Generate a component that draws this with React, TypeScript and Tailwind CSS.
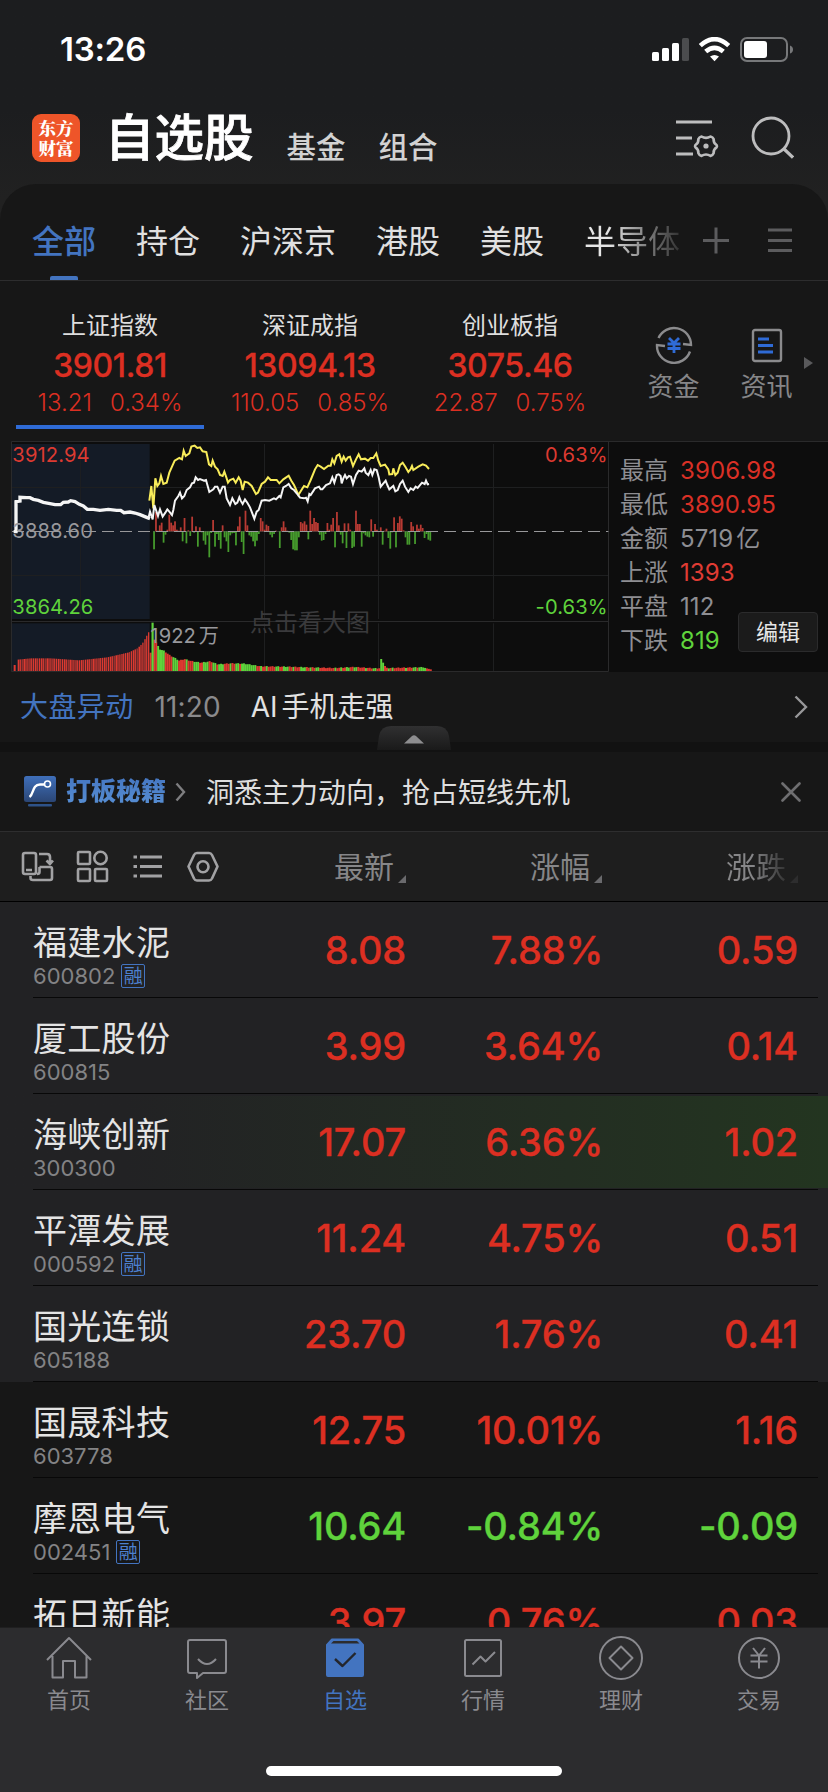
import type { ReactNode } from 'react';

const tabs = ['持仓', '沪深京', '港股', '美股'];

const indices = [
  { name: '上证指数', value: '3901.81', change: '13.21', pct: '0.34%', active: true },
  { name: '深证成指', value: '13094.13', change: '110.05', pct: '0.85%', active: false },
  { name: '创业板指', value: '3075.46', change: '22.87', pct: '0.75%', active: false },
];

const stats = [
  { label: '最高', value: '3906.98', color: 'text-[#d93026]' },
  { label: '最低', value: '3890.95', color: 'text-[#d93026]' },
  { label: '金额', value: '5719', unit: '亿', color: 'text-[#8e8e93]' },
  { label: '上涨', value: '1393', color: 'text-[#e03c34]' },
  { label: '平盘', value: '112', color: 'text-[#8e8e93]' },
  { label: '下跌', value: '819', color: 'text-[#5fd33c]' },
];

type Stock = { name: string; code: string; margin?: boolean; price: string; pct: string; diff: string; down?: boolean; pinned?: boolean; flash?: boolean };

const stocks: Stock[] = [
  { name: '福建水泥', code: '600802', margin: true, price: '8.08', pct: '7.88%', diff: '0.59', pinned: true },
  { name: '厦工股份', code: '600815', price: '3.99', pct: '3.64%', diff: '0.14', pinned: true },
  { name: '海峡创新', code: '300300', price: '17.07', pct: '6.36%', diff: '1.02', pinned: true, flash: true },
  { name: '平潭发展', code: '000592', margin: true, price: '11.24', pct: '4.75%', diff: '0.51', pinned: true },
  { name: '国光连锁', code: '605188', price: '23.70', pct: '1.76%', diff: '0.41', pinned: true },
  { name: '国晟科技', code: '603778', price: '12.75', pct: '10.01%', diff: '1.16' },
  { name: '摩恩电气', code: '002451', margin: true, price: '10.64', pct: '-0.84%', diff: '-0.09', down: true },
  { name: '拓日新能', code: '', price: '3.97', pct: '0.76%', diff: '0.03' },
];

const preLine =
  '41,305 48,305 48,215 60,213 60,202 80,203 90,203 100,208 115,211 130,217 150,221 165,224 182,224 190,217 205,216 212,212 225,215 238,223 250,228 262,238 280,238 300,241 325,238 350,241 362,241 372,248 390,246 405,249 420,254 440,262 450,266';
const whiteLine =
  '446,262 450,245 458,268 463,225 468,240 474,258 480,238 488,260 496,248 502,238 508,245 516,255 520,240 525,212 535,198 540,188 546,205 553,198 560,180 570,172 576,160 582,158 587,142 594,150 600,147 612,152 618,150 628,186 640,178 645,170 652,170 660,188 668,170 674,170 680,205 690,225 697,205 706,222 712,218 718,202 722,212 728,222 735,208 742,218 750,232 763,266 770,245 776,240 785,212 795,210 808,212 822,205 828,208 838,198 842,202 850,172 858,168 866,162 874,175 882,180 892,192 900,203 912,205 918,203 923,214 928,192 932,195 945,175 957,170 962,178 967,178 978,165 990,160 997,142 1003,158 1010,135 1016,133 1022,138 1025,160 1030,145 1035,135 1040,145 1047,138 1053,140 1059,162 1068,135 1076,122 1085,125 1093,115 1097,128 1105,135 1112,120 1117,135 1123,118 1130,120 1136,142 1142,170 1157,152 1162,165 1168,178 1180,168 1186,184 1193,180 1200,162 1208,152 1215,170 1225,186 1232,175 1240,180 1247,170 1253,174 1266,158 1274,162 1278,152 1283,163 1287,162';
const yellowLine =
  '448,212 454,168 460,235 466,145 472,168 478,160 483,138 490,162 500,158 508,128 524,92 538,84 546,88 551,62 557,78 568,70 574,50 584,47 592,54 600,52 608,64 619,66 627,103 634,108 638,92 645,110 653,118 660,135 668,138 673,125 680,145 684,158 690,150 700,146 707,158 716,142 722,152 728,180 734,155 744,158 755,168 768,192 774,188 785,162 795,155 804,142 812,150 830,150 838,160 850,148 866,137 874,152 882,165 888,178 895,195 903,182 912,168 922,172 932,150 945,118 953,105 962,110 972,117 985,107 992,107 997,88 1003,100 1010,78 1018,73 1025,95 1031,80 1037,92 1044,82 1050,80 1059,108 1068,88 1076,73 1083,88 1095,86 1104,92 1112,84 1120,84 1129,70 1135,92 1142,108 1155,104 1165,118 1168,133 1177,132 1180,115 1186,135 1193,128 1200,105 1208,98 1216,110 1225,126 1232,117 1236,108 1240,120 1255,110 1268,103 1278,107 1287,117';

const momentum = [
  -54, 58, 2, 18, 26, -34, -10, 5, 50, 26, 18, 30, 5, 2, 12, -30, 40, -36, 3, -14, 44, -4, 15, -46, 12, -3, -28, -40, -12, -78, -5, 34, -46, -8, -26,
  -52, 18, -18, -30, -62, -12, -6, -5, -42, 15, 44, -32, -68, 62, 18, -12, -16, -30, -45, -28, -8, 40, 30, 5, 20, 16, -10, -18, -8, 2, 0, -50, 12,
  30, 12, 2, -4, -26, -54, -57, -57, -18, 28, 24, 30, 20, -24, 62, 22, 40, 28, 25, -10, -28, -26, -8, 25, 5, 20, 40, -48, 58, 18, -10, -36, 24,
  -50, 24, 5, -50, -46, 62, 22, 22, -46, -6, -12, -16, -18, 36, -16, 22, 5, 0, 12, -40, 2, 8, -20, -52, -3, 42, -48, 25, 45, 38, 3, -18, -40,
  -40, 28, 15, -38, 20, 8, 20, 10, -20, -8, -25, -28,
];

const interpolate = (knots: number[][], x: number) => {
  const i = Math.max(1, knots.findIndex((k) => k[0] >= x));
  const [x0, y0] = knots[i - 1];
  const [x1, y1] = knots[i];
  return y0 + ((y1 - y0) * (x - x0)) / (x1 - x0);
};

const preKnots = [[50, 34], [90, 38], [150, 38], [235, 32], [320, 41], [385, 56], [410, 68], [425, 82], [445, 118], [450, 120]];
const preVolume = Array.from({ length: 69 }, (_, i) => {
  const x = 53 + i * 5.75;
  return { x, h: interpolate(preKnots, x) };
});

const volKnots = [[460, 95], [468, 82], [475, 66], [490, 60], [505, 48], [520, 40], [535, 31], [550, 36], [570, 30], [600, 25], [628, 29], [650, 20], [690, 23], [730, 22], [780, 14], [860, 13], [920, 11], [1000, 9], [1060, 12], [1120, 8], [1300, 12]];
const volColors = 'rrggggrrrrgggrrrrgrrrgggrrgggrrggrgggrrrgrrggrggggggggrrgrrgrrrrggrrgggrrgrrrgggrrgrrggrrrrrrrrgrrgrrggrrggrrrrgrrrggrrggrrgrgrrrrrrgrrrggrggggrrrrggrr';
const volume = Array.from({ length: 146 }, (_, i) => {
  const x = 460 + i * 5.72;
  const base = interpolate(volKnots, x);
  const h = i === 119 ? 36 : i === 120 ? 25 : i === 121 ? 15 : i > 140 ? 12 - (i - 140) * 1.4 : base + ((i * 7) % 3) - 1;
  return { x, h, up: i >= 119 && i <= 120 ? false : volColors[i] === 'r' };
});

function IndexChart() {
  return (
    <svg width="609" height="231" viewBox="0 33 1827 693" className="block shrink-0">
      <rect x="36" y="33" width="1791" height="693" fill="#0d0d0d" />
      <rect x="36" y="42" width="413" height="525" fill="#141b26" />
      <rect x="36" y="580" width="413" height="143" fill="#141b26" />
      <g stroke="#1e1f20" strokeWidth="3" fill="none">
        <path d="M36 172.500H1825M36 436.500H1825M242 42V567M793.500 42V567M793.500 580V723M1135.500 42V567M1135.500 580V723M1480.500 42V567M1480.500 580V723" />
        <path stroke="#2a2a2b" d="M34.500 34.500V724.500H1825.500V34.500M34.500 34.500H1827M36 574.500H1825" />
      </g>
      <text x="930" y="602" textAnchor="middle" fontSize="72" fill="#3a3a3c">点击看大图</text>
      <g>
        {momentum.map((m, i) => (
          <rect key={i} x={459.5 + i * 5.715} y={m > 0 ? 304 - m : 304} width="5.300" height={Math.abs(m)} fill={m > 0 ? '#b83a33' : '#469c2d'} />
        ))}
      </g>
      <path d="M36 304.500H1825" stroke="#98989a" strokeWidth="3" strokeDasharray="36 18" />
      <path d="M459 304.500H1292" stroke="#98989a" strokeWidth="2" opacity="0.400" />
      <rect x="41" y="705" width="6" height="18" fill="#dc3a31" />
      {preVolume.map((b, i) => (
        <rect key={i} x={b.x} y={723 - b.h} width={i % 3 === 0 ? 5 : 4} height={b.h} fill={i % 4 === 2 ? '#b5352f' : '#dc3a31'} />
      ))}
      <rect x="449" y="668" width="6" height="55" fill="#dc3a31" />
      {volume.map((b, i) => (
        <rect key={i} x={b.x} y={723 - b.h} width="5.900" height={b.h} fill={b.up ? '#dc3a31' : '#5fd33c'} />
      ))}
      <rect x="454.500" y="578" width="6.500" height="145" fill="#5fd33c" />
      <polyline points={preLine} fill="none" stroke="#f5f5f5" strokeWidth="10" />
      <polyline points={yellowLine} fill="none" stroke="#f8ec5a" strokeWidth="6" />
      <polyline points={whiteLine} fill="none" stroke="#f5f5f5" strokeWidth="6" />
      <g fontSize="60.500" letterSpacing="0.300">
        <text x="37" y="96" fill="#dc3a31">3912.94</text>
        <text x="37" y="323" fill="#98989c">3888.60</text>
        <text x="37" y="552" fill="#5fd33c">3864.26</text>
        <text x="1823" y="96" textAnchor="end" fill="#dc3a31">0.63%</text>
        <text x="1823" y="552" textAnchor="end" fill="#5fd33c">-0.63%</text>
        <text x="451" y="640" fill="#98989c">1922<tspan dx="8">万</tspan></text>
      </g>
    </svg>
  );
}

function NavItem({ label, active, children }: { label: string; active?: boolean; children: ReactNode }) {
  return (
    <div className={`flex w-[138px] flex-col items-center ${active ? 'text-[#4374c0]' : 'text-[#8a8a8f]'}`}>
      <svg width="48" height="48" viewBox="0 0 48 48" fill="none" stroke="currentColor" strokeWidth="2" strokeLinejoin="round">
        {children}
      </svg>
      <span className="mt-[5px] text-[22px] leading-[26px]">{label}</span>
    </div>
  );
}

const Corner = () => (
  <svg width="8" height="8" viewBox="0 0 8 8" className="mb-[7px] ml-1 shrink-0 self-end">
    <path d="M8 0V8H0Z" fill="#6a6a6d" />
  </svg>
);

export default function App() {
  return (
    <div className="flex h-[1792px] w-[828px] flex-col overflow-hidden bg-[#171717] font-['Inter','Noto_Sans_CJK_SC',sans-serif] text-[#e6e6e6]">
      <div className="h-[220px] shrink-0 bg-linear-to-b from-[#1c1d1f] from-50% to-[#212121] to-90%">
        <div className="flex h-[100px] items-center justify-between pr-[34px] pl-[60px]">
          <span className="text-[33px] font-semibold tracking-[-0.2px] text-white">13:26</span>
          <svg width="142" height="26" viewBox="0 0 142 26">
            <g fill="#fff">
              <rect x="0" y="15" width="7" height="9" rx="1.500" />
              <rect x="10" y="11" width="7" height="13" rx="1.500" />
              <rect x="20" y="6" width="7" height="18" rx="1.500" />
              <rect x="30" y="1" width="7" height="23" rx="1.500" fill="#4b4c4e" />
              <path d="M62.500 24.200 58 19.600Q62.500 16.200 67 19.600Z" />
            </g>
            <path d="M48.300 8.600Q62.500-4.200 76.700 8.600M53.700 14.600Q62.500 7 71.300 14.600" fill="none" stroke="#fff" strokeWidth="4.600" />
            <rect x="89" y="1" width="46" height="23" rx="6" fill="none" stroke="#77787a" strokeWidth="2" />
            <rect x="92" y="4" width="23" height="17" rx="3" fill="#fff" />
            <path d="M138 8.500Q141 9.500 141 12.500T138 16.500Z" fill="#77787a" />
          </svg>
        </div>
        <div className="flex h-[84px] items-start pr-[34px] pl-8">
          <div className="mt-[14px] flex size-12 flex-col items-center justify-center rounded-[9px] bg-[#ee5529] font-['Noto_Serif_CJK_SC','Noto_Sans_CJK_SC',serif] text-[17.5px] leading-[20px] font-black text-white">
            <span>东方</span>
            <span>财富</span>
          </div>
          <div className="ml-[25px] flex items-baseline">
            <h1 className="text-[49.5px] leading-[76px] font-medium text-white [-webkit-text-stroke:0.8px_#fff]">自选股</h1>
            <span className="relative top-[2px] ml-[33px] text-[29.5px] font-medium text-[#d2d2d2]">基金</span>
            <span className="relative top-[2px] ml-[33px] text-[29.5px] font-medium text-[#d2d2d2]">组合</span>
          </div>
          <svg width="120" height="44" viewBox="0 0 120 44" fill="none" stroke="#bdbdbe" strokeWidth="3" className="mt-4 ml-auto">
            <path d="M2 6H38M2 22H18M2 38H19" />
            <path strokeWidth="2.600" strokeLinejoin="round" d="M27.500 20.500 Q32 23.200 36.500 20.500 Q38.800 21 39.600 23 Q39.300 27 42.600 29 Q43.400 30.200 42.600 31.400 Q39.300 33.300 39.600 37.300 Q38.800 39.300 36.500 39.900 Q32 37.200 27.500 39.900 Q25.200 39.300 24.400 37.300 Q24.700 33.300 21.400 31.400 Q20.600 30.200 21.400 29 Q24.700 27 24.400 23 Q25.200 21 27.500 20.500Z" />
            <circle cx="32" cy="30" r="2.600" fill="#bdbdbe" stroke="none" />
            <circle cx="97" cy="20" r="18" strokeWidth="2.800" />
            <path strokeWidth="3.200" d="M109.500 32.500 119 41.500" />
          </svg>
        </div>
      </div>

      <div className="-mt-9 h-[97px] shrink-0 rounded-t-[36px] border-b border-[#2d2d2e] bg-[#171717]">
        <div className="flex h-full items-stretch pl-8">
          <div className="relative flex items-center text-[32px] font-medium text-[#4374c0]">
            <span className="mt-5">全部</span>
            <i className="absolute bottom-0 left-[18px] h-1 w-7 rounded-t-xs bg-[#4374c0]" />
          </div>
          {tabs.map((t) => (
            <div key={t} className="ml-10 flex items-center text-[32px] text-[#e0e0e0]"><span className="mt-5">{t}</span></div>
          ))}
          <div className="ml-10 flex items-center bg-linear-to-r from-[#e6e6e6] from-25% to-[#333] bg-clip-text text-[32px] text-transparent"><span className="mt-5">半导体</span></div>
          <svg width="92" height="28" viewBox="0 0 92 28" stroke="#5c5c5e" strokeWidth="3" className="mt-[42px] ml-[22px]">
            <path d="M1 14.500H27M14 1.500V27.500M66 4H90M66 14.500H90M66 24.500H90" />
          </svg>
        </div>
      </div>

      <div className="flex h-[160px] shrink-0 pl-[10px]">
        {indices.map((it) => (
          <div key={it.name} className="relative flex w-[200px] flex-col items-center">
            <span className="mt-[30px] text-[24px] leading-[30px] text-[#dedede]">{it.name}</span>
            <span className="mt-[8px] text-[32px] leading-[34px] font-medium tracking-[-0.4px] text-[#dc2f22] [-webkit-text-stroke:0.3px_#dc2f22]">{it.value}</span>
            <span className="mt-[6px] flex gap-[18px] text-[24px] leading-[28px] font-light text-[#dc2f22]"><span>{it.change}</span><span>{it.pct}</span></span>
            {it.active && <i className="absolute bottom-[12px] left-[6px] h-1 w-[188px] bg-[#2f6bd6]" />}
          </div>
        ))}
        <div className="ml-[17px] flex w-[93px] flex-col items-center">
          <svg width="38" height="38" viewBox="0 0 38 38" fill="none" stroke="#8b8b8d" strokeWidth="2.400" className="mt-[45px]">
            <path d="M3.500 12A17 17 0 0 1 36 19L28 18M35 25.500A17 17 0 0 1 2 19L10 20" />
            <path stroke="#2f6bd6" strokeWidth="2.800" d="M14 12 19 17 24 12M12.500 18H25.500M12.500 22.500H25.500M19 17V27" />
          </svg>
          <span className="mt-[8px] text-[26px] leading-[30px] text-[#868688]">资金</span>
        </div>
        <div className="flex w-[93px] flex-col items-center">
          <svg width="38" height="38" viewBox="0 0 38 38" fill="none" stroke="#8b8b8d" strokeWidth="2.400" className="mt-[45px]">
            <rect x="5" y="4" width="28" height="31" rx="2" />
            <path stroke="#2f6bd6" strokeWidth="2.800" d="M10 13H21M10 19.500H25M10 26H25" />
          </svg>
          <span className="mt-[8px] text-[26px] leading-[30px] text-[#868688]">资讯</span>
        </div>
        <svg width="9" height="12" viewBox="0 0 9 12" className="mt-[76px] -ml-[9px]"><path d="M0 0 9 6 0 12Z" fill="#5a5a5c" /></svg>
      </div>

      <div className="flex h-[231px] shrink-0">
        <IndexChart />
        <div className="relative flex-1 border-t border-[#2a2a2b] bg-[#0d0d0d] pt-[12px] pl-[11px]">
          {stats.map((s) => (
            <div key={s.label} className="flex h-[34px] items-center text-[24px]">
              <span className="w-[60px] text-[#8e8e92]">{s.label}</span>
              <span className={`tracking-[0.1px] ${s.color}`}>{s.value}{s.unit && <span className="ml-[3px]">{s.unit}</span>}</span>
            </div>
          ))}
          <button className="absolute top-[170px] right-[10px] h-10 w-20 rounded-[4px] border border-[#2b2b2c] bg-[#1b1b1b] text-[22px] leading-[38px] text-[#e6e6e6]">编辑</button>
        </div>
      </div>

      <div className="relative flex h-[70px] shrink-0 items-center pl-5 text-[28px]">
        <span className="tracking-[0.4px] text-[#4374c0]">大盘异动</span>
        <span className="ml-[21px] tracking-[0.1px] text-[#8a8a8c]">11:20</span>
        <span className="ml-[30px] text-[#e2e2e2]">AI<span className="ml-[4px]">手机走强</span></span>
        <svg width="14" height="24" viewBox="0 0 14 24" fill="none" stroke="#98989a" strokeWidth="2.400" className="mr-[20px] ml-auto"><path d="M1.500 1.500 12 12 1.500 22.500" /></svg>
        <svg width="74" height="24" viewBox="0 0 74 24" className="absolute top-[54px] left-[377px]">
          <defs><linearGradient id="grip" x1="0" y1="0" x2="0" y2="1"><stop stopColor="#303031" /><stop offset="1" stopColor="#1a1a1a" /></linearGradient></defs>
          <path d="M0 24 2 10Q4 0 14 0H60Q70 0 72 10L74 24Z" fill="url(#grip)" />
          <path d="M27 17.500 35 10Q37 8.500 39 10L47 17.500Z" fill="#8e8e90" />
        </svg>
      </div>
      <div className="h-[10px] shrink-0 bg-[#121212]" />

      <div className="flex h-[80px] shrink-0 items-center border-b border-[#2e2e2f] pl-6">
        <svg width="32" height="32" viewBox="0 0 32 32">
          <defs><linearGradient id="tip" x1="0" y1="0" x2="0" y2="1"><stop stopColor="#3f6fba" /><stop offset="1" stopColor="#2b4675" /></linearGradient></defs>
          <rect width="32" height="26" rx="2.500" fill="url(#tip)" />
          <rect x="4" y="28" width="24" height="2.500" rx="1" fill="#2e5288" />
          <path d="M5.500 21C10 18 8 8.500 16 8.500H20" fill="none" stroke="#fff" strokeWidth="2.400" />
          <circle cx="23.500" cy="8" r="3" fill="none" stroke="#fff" strokeWidth="1.600" />
        </svg>
        <span className="ml-[10px] bg-linear-to-b from-[#4374c0] to-[#5a92d6] bg-clip-text text-[25px] font-black text-transparent">打板秘籍</span>
        <svg width="11" height="20" viewBox="0 0 11 20" fill="none" stroke="#7e7e80" strokeWidth="2.400" className="ml-[9px]"><path d="M1.500 1.500 9 10 1.500 18.500" /></svg>
        <span className="ml-[20px] pt-[2px] text-[28px] text-[#dedede]">洞悉主力动向，抢占短线先机</span>
        <svg width="20" height="20" viewBox="0 0 20 20" stroke="#6e6e70" strokeWidth="2.600" strokeLinecap="round" className="mr-[27px] ml-auto"><path d="M1.500 1.500 18.500 18.500M18.500 1.500 1.500 18.500" /></svg>
      </div>

      <div className="flex h-[70px] shrink-0 items-center border-b border-black bg-[#1e1e1e] pl-5 text-[30px] text-[#868688]">
        <svg width="200" height="34" viewBox="0 0 200 34" fill="none" stroke="#a2a2a4" strokeWidth="2.600" strokeLinejoin="round">
          <rect x="3" y="3" width="13" height="21" rx="2" />
          <path d="M6 20H12M19 4H27Q30 4 30 7V13M26.500 10.500 30 14 33 10.500M19.500 17H30Q32 17 32 19V28Q32 30 30 30H13Q10.500 30 10.500 28V26M19.500 17V22Q19.500 24 17 24" />
          <rect x="58" y="2" width="12" height="12" rx="1" />
          <circle cx="80.500" cy="8" r="6.200" />
          <rect x="58" y="19" width="12" height="12" rx="1" />
          <rect x="75" y="19" width="12" height="12" rx="1" />
          <path strokeWidth="3" d="M120 7H142M120 16.500H142M120 26H142M113.500 7H117M113.500 16.500H117M113.500 26H117" />
          <path d="M168.500 16.500 174 5Q175 3 177 3H189Q191 3 192 5L197.500 16.500 192 28.500Q191 30.500 189 30.500H177Q175 30.500 174 28.500Z" />
          <circle cx="183" cy="16.700" r="5.500" />
        </svg>
        <div className="flex w-[186px] items-center justify-end pt-px"><span>最新</span><Corner /></div>
        <div className="flex w-[196px] items-center justify-end pt-px"><span>涨幅</span><Corner /></div>
        <div className="flex w-[196px] items-center justify-end pt-px"><span className="bg-linear-to-r from-[#868688] from-45% to-[#333] bg-clip-text text-transparent">涨跌</span><span className="flex self-end opacity-20"><Corner /></span></div>
      </div>

      <div className="min-h-0 flex-1 overflow-hidden">
        {stocks.map((s) => (
          <div key={s.name} className={`relative flex h-24 items-center ${s.pinned ? 'bg-[#222224]' : 'bg-[#171717]'}`}>
            {s.flash && <i className="absolute inset-x-0 top-[2px] bottom-[2px] bg-linear-to-r from-[#222224] from-15% to-[#233520]" />}
            <div className="relative flex h-24 w-[205px] flex-col pl-[33px]">
              <span className="mt-[21px] text-[34px] leading-[40px] tracking-[0.3px] text-[#e4e4e4]">{s.name}</span>
              <span className="mt-px flex h-6 items-center text-[22px] leading-6 text-[#838385]">
                {s.code}
                {s.margin && <b className="ml-[6px] flex size-6 items-center justify-center rounded-xs border border-[#4374c0] text-[19px] leading-none font-normal tracking-normal text-[#4d80cf]">融</b>}
              </span>
            </div>
            <div className={`relative flex text-right text-[38px] leading-[46px] font-medium tracking-[-0.2px] [-webkit-text-stroke:0.35px_currentColor] ${s.down ? 'text-[#5fd33c]' : 'text-[#dc2f22]'}`}>
              <span className="w-[201px]">{s.price}</span>
              <span className="w-[197px]">{s.pct}</span>
              <span className="w-[195px]">{s.diff}</span>
            </div>
            <i className="absolute right-[10px] bottom-0 left-[33px] h-px bg-[#080808]" />
          </div>
        ))}
      </div>

      <div className="flex h-[165px] shrink-0 flex-col items-center border-t border-[#1f1f20] bg-[#2c2c2e]">
        <div className="flex h-[138px] pt-[6px]">
          <NavItem label="首页"><path d="M2 26 24 4 46 26M7.500 22V43.500H18V27H30V43.500H41.500V22" /></NavItem>
          <NavItem label="社区"><path d="M7 6H41Q43 6 43 8V37Q43 39 41 39H20L14 44V39H7Q5 39 5 37V8Q5 6 7 6ZM15 25Q24 35 33 25" /></NavItem>
          <NavItem label="自选" active>
            <path d="M6 11 11 5.500H37L42 11V41Q42 42 41 42H7Q6 42 6 41Z" fill="currentColor" />
            <path d="M10 9.500 12.500 7H36L38.500 9.500Z" fill="#2c2c2e" stroke="none" />
            <path d="M14 25 21.500 32 34.500 19" stroke="#24262c" strokeWidth="2.400" />
          </NavItem>
          <NavItem label="行情"><rect x="6" y="6" width="36" height="36" rx="1.500" /><path d="M13.500 30.500 21.500 22.500 26.500 27.500 36 18" /></NavItem>
          <NavItem label="理财"><circle cx="24" cy="24" r="21" /><path d="M24 12.500 35.500 24 24 35.500 12.500 24Z" /></NavItem>
          <NavItem label="交易"><circle cx="24" cy="24" r="20" /><path d="M18 14 24 21.500 30 14M15.500 21.500H32.500M15.500 27.500H32.500M24 21.500V34.500" /></NavItem>
        </div>
        <div className="h-[10px] w-[296px] shrink-0 rounded-full bg-white" />
      </div>
    </div>
  );
}
